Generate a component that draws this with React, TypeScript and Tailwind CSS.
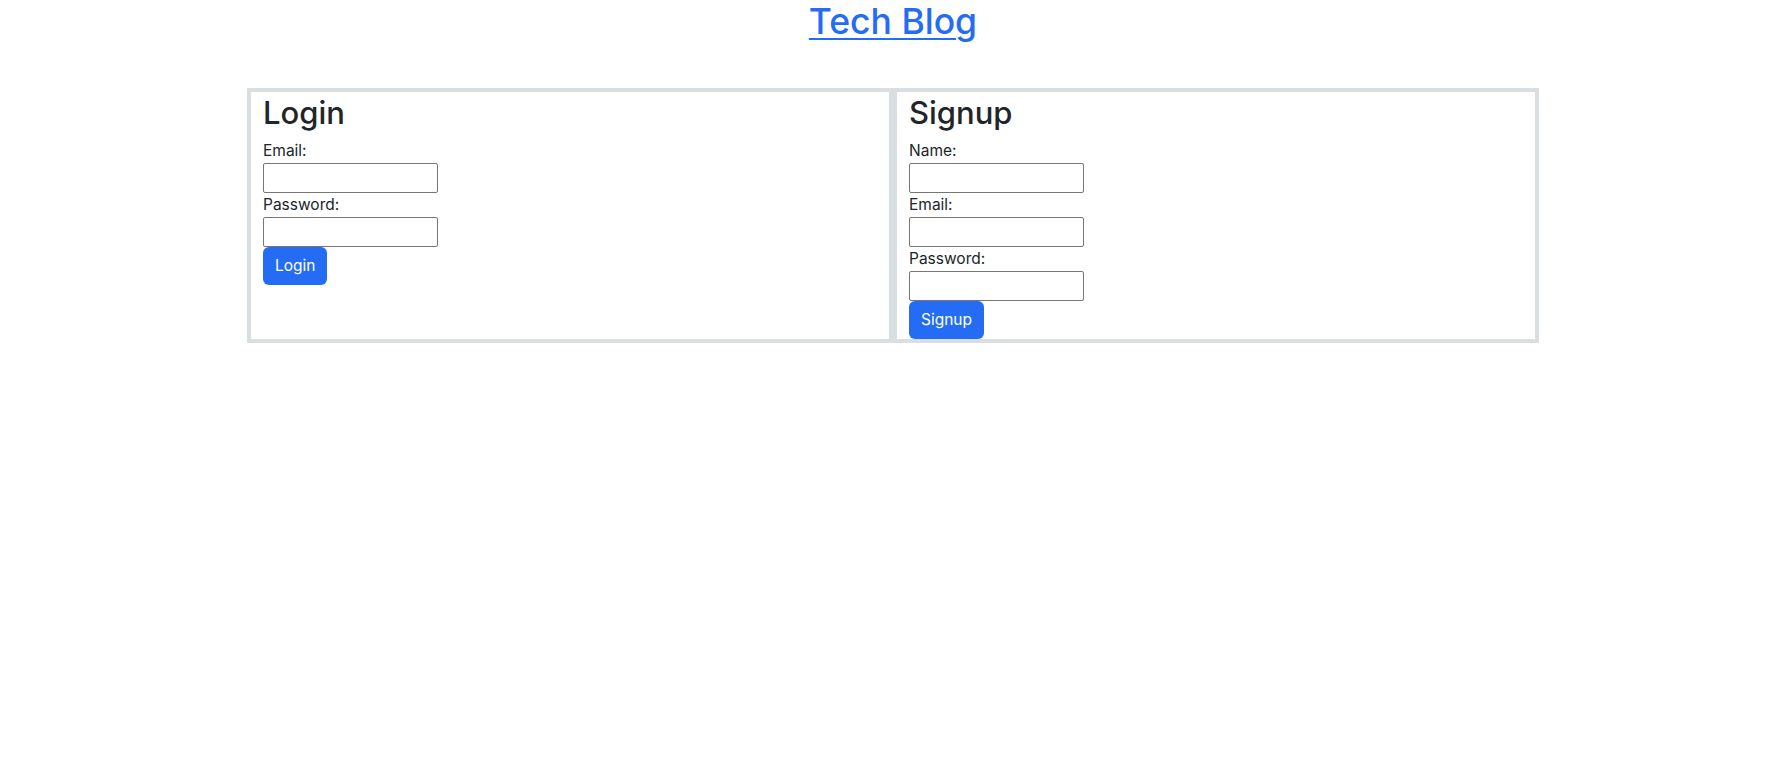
import React from "react";

type Field = { label: string; type: string };

const FormBox: React.FC<{ title: string; fields: Field[]; button: string }> = ({
  title,
  fields,
  button,
}) => {
  return (
    <div className="w-1/2 border-4 border-[#d9dee2] pl-[12px] pt-[2px]">
      <h2 className="mb-2 text-[31px] font-medium leading-[37px] text-[#212529]">{title}</h2>
      <form className="flex flex-col items-start" onSubmit={(e) => e.preventDefault()}>
        {fields.map((f) => (
          <React.Fragment key={f.label}>
            <label className="text-[15.5px] leading-[24px] text-[#212529]">{f.label}</label>
            <input
              type={f.type}
              className="h-[30px] w-[175px] rounded-[2px] border border-[#767676] bg-white px-1"
            />
          </React.Fragment>
        ))}
        <button
          type="submit"
          className="rounded-[6px] bg-[#256cf4] px-3 py-[7px] text-[15.5px] leading-[24px] text-white"
        >
          {button}
        </button>
      </form>
    </div>
  );
};

export default function App() {
  return (
    <div className="min-h-screen bg-white font-['Inter','Liberation_Sans',Arial,sans-serif]">
      <div className="ml-[247px] w-[1292px]">
        <h1 className="mb-[45px] pt-[1px] text-center text-[35.5px] font-medium leading-[42px]">
          <a href="#" className="text-[#256cf4] underline decoration-2 underline-offset-[4px]">
            Tech Blog
          </a>
        </h1>
        <div className="flex">
          <FormBox
            title="Login"
            fields={[
              { label: "Email:", type: "email" },
              { label: "Password:", type: "password" },
            ]}
            button="Login"
          />
          <FormBox
            title="Signup"
            fields={[
              { label: "Name:", type: "text" },
              { label: "Email:", type: "email" },
              { label: "Password:", type: "password" },
            ]}
            button="Signup"
          />
        </div>
      </div>
    </div>
  );
}
